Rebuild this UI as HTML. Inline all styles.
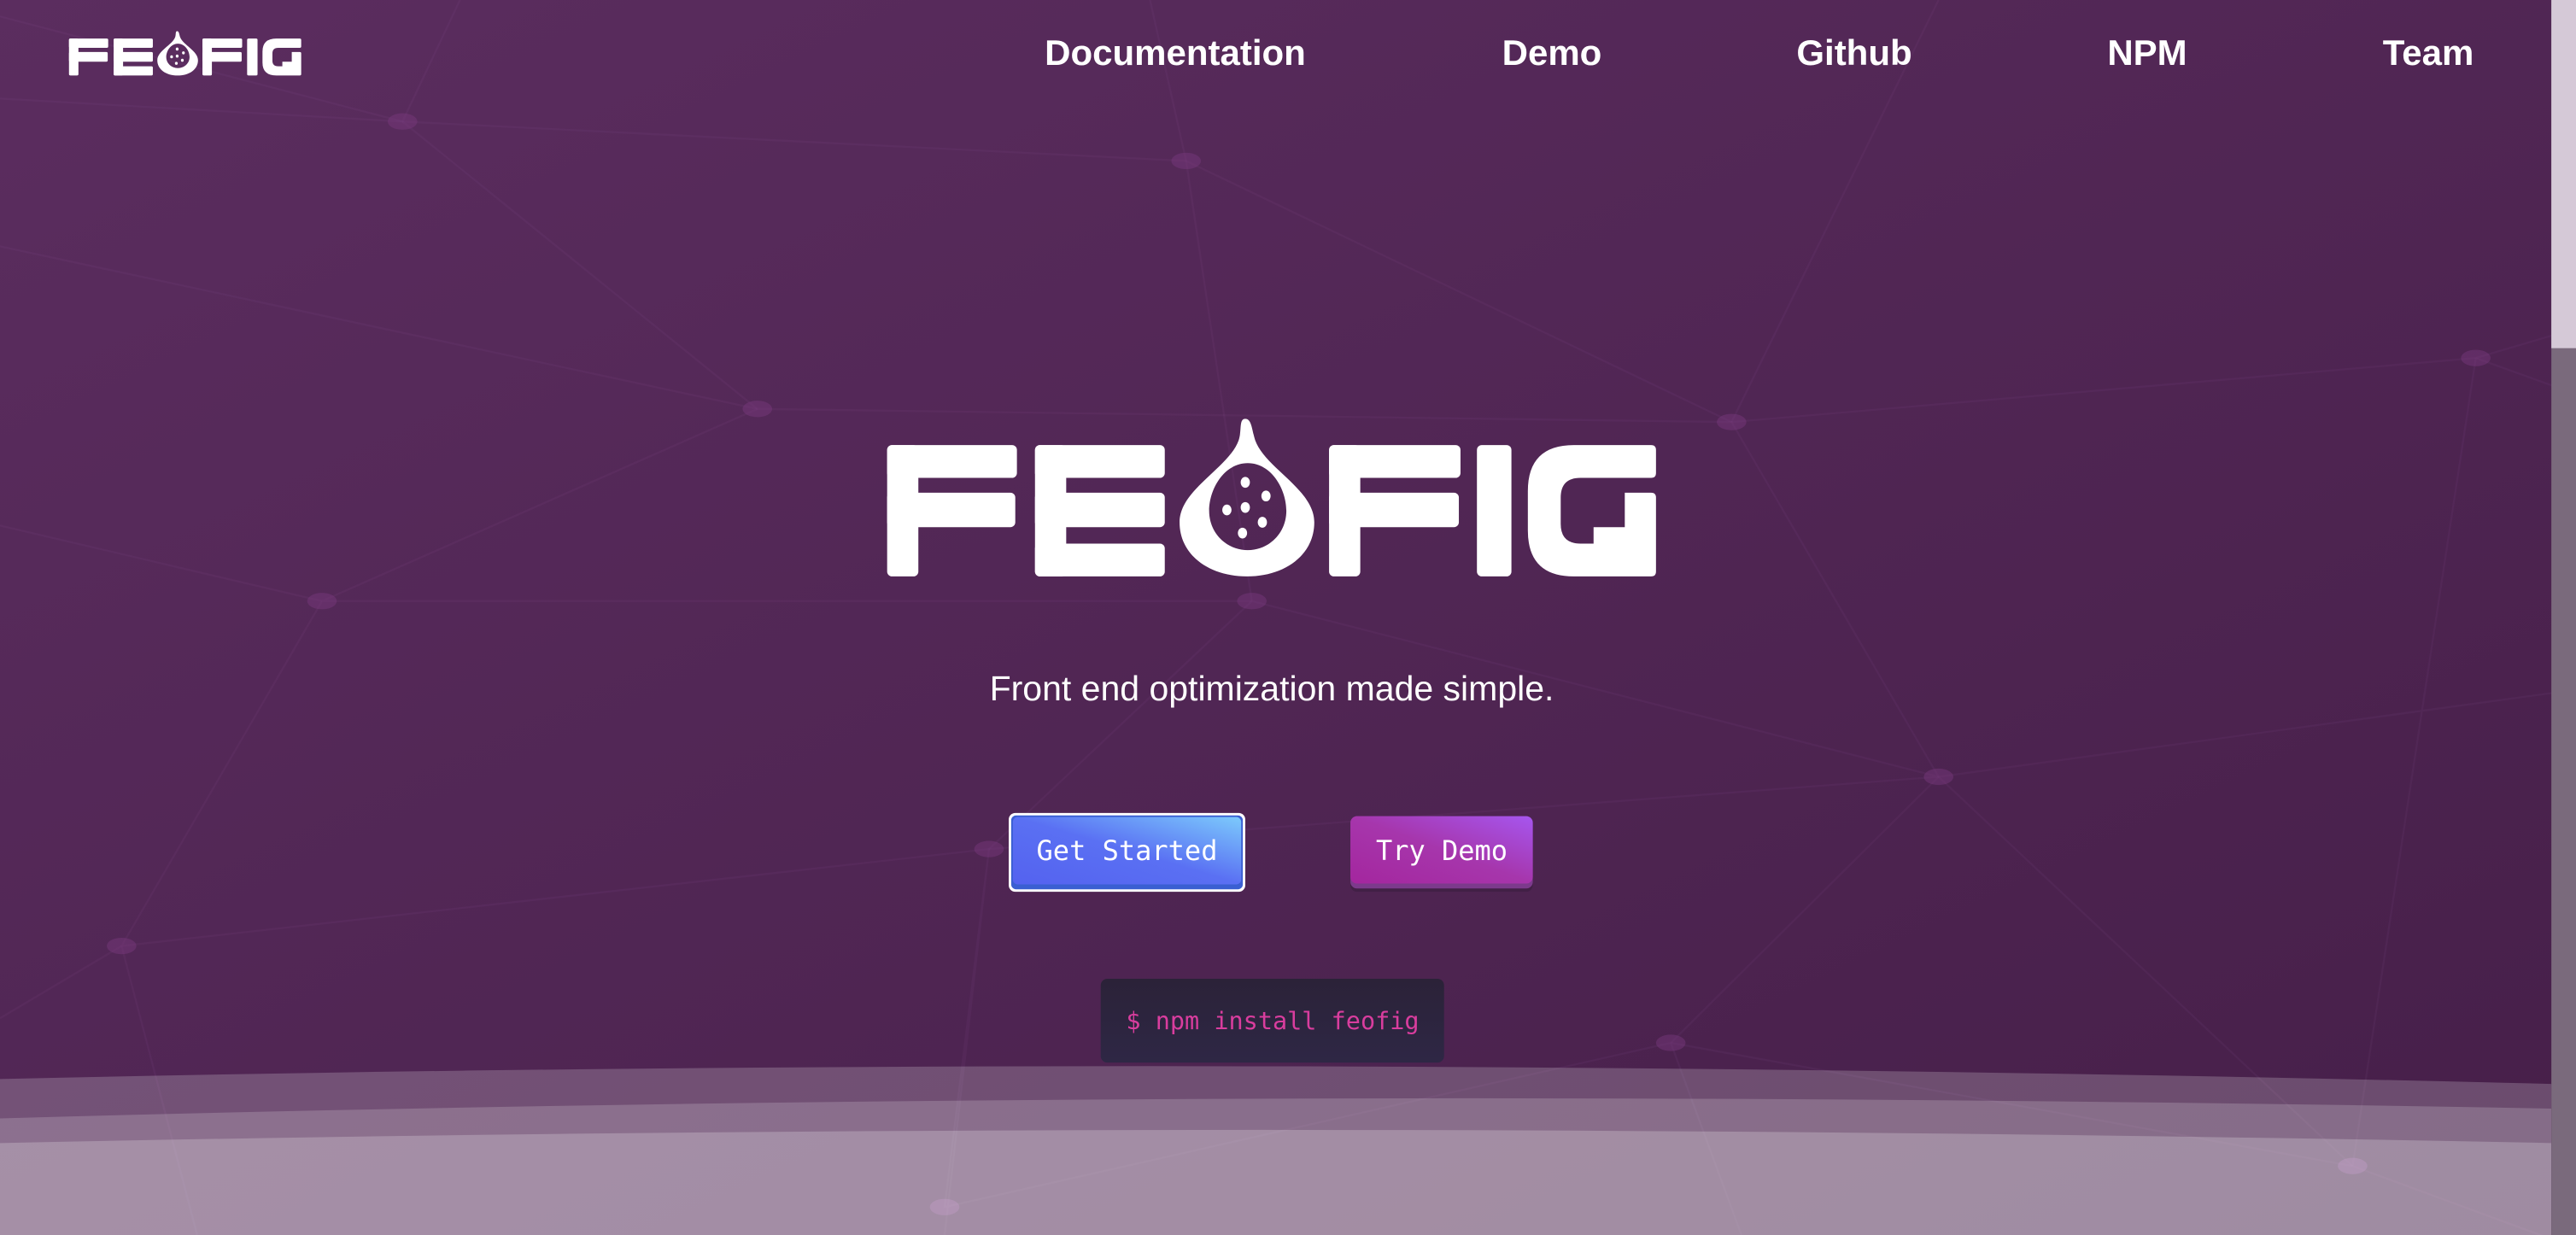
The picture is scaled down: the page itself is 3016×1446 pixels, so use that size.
<!DOCTYPE html>
<html><head><meta charset="utf-8"><style>
html,body{margin:0;padding:0;width:3016px;height:1446px;overflow:hidden;background:#4e2752}
.bg{position:absolute;left:0;top:0}
.t{position:absolute;color:#fff;font-family:"Liberation Sans",sans-serif;white-space:nowrap}
.nav{top:38px;font-size:42px;font-weight:bold;transform:translateX(-50%)}
.btn{position:absolute;box-sizing:border-box;display:flex;align-items:center;justify-content:center;font-family:"DejaVu Sans Mono","Liberation Mono",monospace;color:#fff;font-size:32px}
</style></head><body>
<svg class="bg" width="3016" height="1446" viewBox="0 0 1568 752" preserveAspectRatio="none">
<defs>
<linearGradient id="g0" x1="0" y1="0" x2="1" y2="1"><stop offset="0" stop-color="#5b2d5f"/><stop offset="1" stop-color="#461f49"/></linearGradient>
<linearGradient id="b1" x1="0" y1="1" x2="1" y2="0"><stop offset="0" stop-color="#5462ef"/><stop offset="0.5" stop-color="#5a70f3"/><stop offset="1" stop-color="#7ccafc"/></linearGradient>
<linearGradient id="b2" x1="0" y1="1" x2="1" y2="0"><stop offset="0" stop-color="#a4269e"/><stop offset="0.5" stop-color="#a636ac"/><stop offset="1" stop-color="#a656ef"/></linearGradient>
<linearGradient id="n1" x1="0" y1="0" x2="0" y2="1"><stop offset="0" stop-color="#2b2238"/><stop offset="1" stop-color="#2e2745"/></linearGradient>
<g id="logo">
<g fill="#fff">
<rect x="540" y="271" width="79" height="20" rx="3"/><rect x="540" y="271" width="19" height="80" rx="3"/><rect x="540" y="300" width="78" height="21" rx="3"/>
<rect x="630" y="271" width="19" height="80" rx="3"/><rect x="630" y="271" width="79" height="20" rx="3"/><rect x="630" y="300" width="79" height="21" rx="3"/><rect x="630" y="331" width="79" height="20" rx="3"/>
<path fill-rule="evenodd" d="M758,255 C762,255 762,262 764,268 C770,285 800,298 800,318 C800,338 782,351 759,351 C736,351 718,338 718,318 C718,298 748,285 754,268 C756,262 754,255 758,255 Z M759.5,282 C745,282 736,298 736,311 C736,325 747,335 759.5,335 C772,335 783,325 783,311 C783,298 774,282 759.5,282 Z"/>
<rect x="809" y="271" width="80" height="20" rx="3"/><rect x="809" y="271" width="19" height="80" rx="3"/><rect x="809" y="300" width="79" height="21" rx="3"/>
<rect x="899" y="271" width="21" height="80" rx="3"/>
<path d="M958,271 H1005 Q1008,271 1008,274 V288 Q1008,291 1005,291 H962 Q950,291 950,303 V319 Q950,331 962,331 H970 V321 H989 V300 H1005 Q1008,300 1008,303 V348 Q1008,351 1005,351 H958 Q930,351 930,323 V299 Q930,271 958,271 Z"/>
</g>
<g fill="#fff">
<ellipse cx="758" cy="293.7" rx="2.8" ry="3.3"/><ellipse cx="770.6" cy="302" rx="2.8" ry="3.3"/><ellipse cx="758" cy="309" rx="2.8" ry="3.3"/><ellipse cx="746.8" cy="310.5" rx="2.8" ry="3.3"/><ellipse cx="768.4" cy="318" rx="2.8" ry="3.3"/><ellipse cx="756.3" cy="324.6" rx="2.8" ry="3.3"/>
</g>
</g>
</defs>
<rect width="1568" height="752" fill="url(#g0)"/>
<g stroke="#c27ac4" stroke-opacity="0.06" stroke-width="1.2" fill="none">
<path d="M0,60 L245,74 L722,98 L1054,257 L1507,218 L1568,200"/>
<path d="M245,74 L461,249 L1054,257 L1180,473 L1432,710 L1568,760"/>
<path d="M461,249 L196,366 L762,366 L1180,473 L602,517 L74,576 L196,366"/>
<path d="M1180,473 L1017,635 L575,735 L602,517 L575,752"/>
<path d="M1507,218 L1432,710 M1017,635 L1060,752 M74,576 L120,752 M0,320 L196,366 M0,10 L245,74 L280,0 M722,98 L700,0 M1054,257 L1180,0 M1507,218 L1568,240 M762,366 L722,98 M1180,473 L1568,420 M1017,635 L1432,710 M74,576 L0,620 M602,517 L762,366 M461,249 L0,150"/>
</g>
<g fill="#7a3a7e" fill-opacity="0.45">
<ellipse cx="245" cy="74" rx="9" ry="5"/><ellipse cx="722" cy="98" rx="9" ry="5"/><ellipse cx="461" cy="249" rx="9" ry="5"/><ellipse cx="1054" cy="257" rx="9" ry="5"/><ellipse cx="1507" cy="218" rx="9" ry="5"/><ellipse cx="196" cy="366" rx="9" ry="5"/><ellipse cx="762" cy="366" rx="9" ry="5"/><ellipse cx="1180" cy="473" rx="9" ry="5"/><ellipse cx="602" cy="517" rx="9" ry="5"/><ellipse cx="74" cy="576" rx="9" ry="5"/><ellipse cx="1017" cy="635" rx="9" ry="5"/>
</g>
<path d="M0,657 Q750,640 1553,660 V752 H0 Z" fill="#ffffff" fill-opacity="0.2"/>
<path d="M0,681 Q750,660 1553,675 V752 H0 Z" fill="#ffffff" fill-opacity="0.18"/>
<path d="M0,696 Q760,680 1553,696 V752 H0 Z" fill="#ffffff" fill-opacity="0.22"/>
<ellipse cx="575" cy="735" rx="9" ry="5" fill="#c9a0cf" fill-opacity="0.35"/><ellipse cx="1432" cy="710" rx="9" ry="5" fill="#c9a0cf" fill-opacity="0.35"/>
<rect x="1553" y="0" width="15" height="752" fill="#7a6a7c"/>
<rect x="1553" y="0" width="15" height="212" fill="#d5c9d7"/>
<use href="#logo"/>
<g transform="translate(42,19) scale(0.302,0.281) translate(-540,-255)"><use href="#logo"/></g>
<rect x="614" y="495" width="144" height="48" rx="4" fill="#fff"/>
<rect x="615.5" y="496.5" width="141" height="45" rx="3" fill="#3a5fd2"/>
<rect x="616.5" y="497.5" width="139" height="41" rx="3" fill="url(#b1)"/>
<rect x="822" y="497" width="111" height="44" rx="4" fill="#2f1a33" fill-opacity="0.35" transform="translate(0,2)"/>
<rect x="822" y="497" width="111" height="44" rx="4" fill="#7c3a8c"/>
<rect x="822" y="497" width="111" height="41" rx="4" fill="url(#b2)"/>
<rect x="670" y="596" width="209" height="51" rx="4" fill="url(#n1)"/>
</svg>
<div class="t nav" style="left:1376px">Documentation</div>
<div class="t nav" style="left:1817px">Demo</div>
<div class="t nav" style="left:2171px">Github</div>
<div class="t nav" style="left:2514px">NPM</div>
<div class="t nav" style="left:2843px">Team</div>
<div class="t" style="left:0;width:2978px;text-align:center;top:783px;font-size:41px">Front end optimization made simple.</div>
<div class="btn" style="left:1181px;top:952px;width:277px;height:88px">Get Started</div>
<div class="btn" style="left:1581px;top:956px;width:214px;height:80px">Try Demo</div>
<div class="btn" style="left:1289px;top:1146px;width:402px;height:98px;font-size:28.5px;color:#d93d9e">$ npm install feofig</div>
</body></html>
